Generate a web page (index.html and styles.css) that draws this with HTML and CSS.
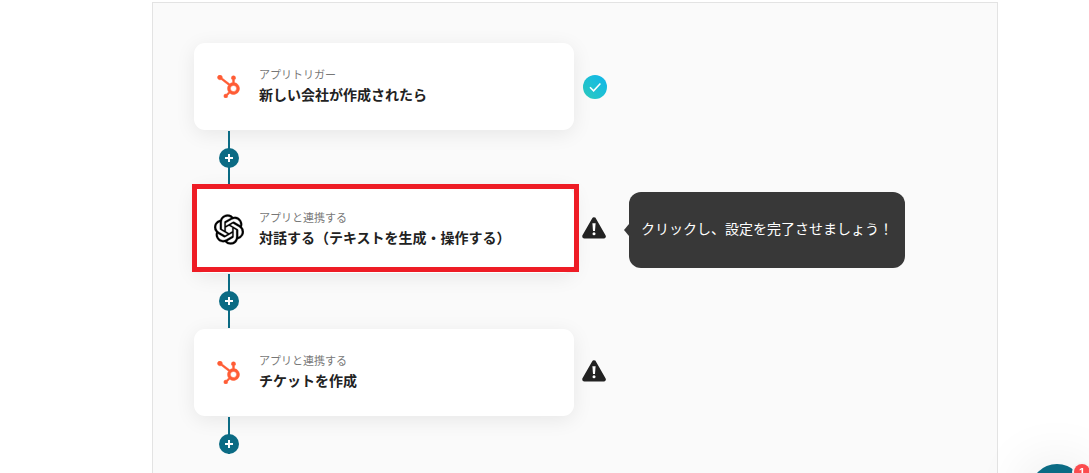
FILE: index.html
```
<!DOCTYPE html>
<html lang="ja">
<head>
<meta charset="utf-8">
<title>フロー</title>
<link rel="stylesheet" href="styles.css">
</head>
<body>
<svg class="defs" aria-hidden="true">
  <symbol id="hubspot" viewBox="0 0 24 24">
    <path fill="#ff5c35" stroke="#ff5c35" stroke-width=".5" d="M18.164 7.93V5.084a2.198 2.198 0 001.267-1.978v-.067A2.2 2.2 0 0017.238.845h-.067a2.2 2.2 0 00-2.193 2.193v.067a2.196 2.196 0 001.252 1.973l.013.006v2.852a6.22 6.22 0 00-2.969 1.31l.012-.01-7.828-6.095A2.497 2.497 0 104.3 4.656l-.012.006 7.697 5.991a6.176 6.176 0 00-1.038 3.446c0 1.343.425 2.588 1.147 3.607l-.013-.02-2.342 2.343a1.968 1.968 0 00-.58-.095h-.002a2.033 2.033 0 102.033 2.033 1.978 1.978 0 00-.1-.595l.005.014 2.317-2.317a6.247 6.247 0 104.782-11.134l-.036-.005zm-.964 9.378a3.206 3.206 0 113.215-3.207v.002a3.206 3.206 0 01-3.207 3.207z"/>
  </symbol>
  <symbol id="openai" viewBox="0 0 24 24">
    <path d="M22.2819 9.8211a5.9847 5.9847 0 0 0-.5157-4.9108 6.0462 6.0462 0 0 0-6.5098-2.9A6.0651 6.0651 0 0 0 4.9807 4.1818a5.9847 5.9847 0 0 0-3.9977 2.9 6.0462 6.0462 0 0 0 .7427 7.0966 5.98 5.98 0 0 0 .511 4.9107 6.051 6.051 0 0 0 6.5146 2.9001A5.9847 5.9847 0 0 0 13.2599 24a6.0557 6.0557 0 0 0 5.7718-4.2058 5.9894 5.9894 0 0 0 3.9977-2.9001 6.0557 6.0557 0 0 0-.7475-7.0729zm-9.022 12.6081a4.4755 4.4755 0 0 1-2.8764-1.0408l.1419-.0804 4.7783-2.7582a.7948.7948 0 0 0 .3927-.6813v-6.7369l2.02 1.1686a.071.071 0 0 1 .038.052v5.5826a4.504 4.504 0 0 1-4.4945 4.4944zm-9.6607-4.1254a4.4708 4.4708 0 0 1-.5346-3.0137l.142.0852 4.783 2.7582a.7712.7712 0 0 0 .7806 0l5.8428-3.3685v2.3324a.0804.0804 0 0 1-.0332.0615L9.74 19.9502a4.4992 4.4992 0 0 1-6.1408-1.6464zM2.3408 7.8956a4.485 4.485 0 0 1 2.3655-1.9728V11.6a.7664.7664 0 0 0 .3879.6765l5.8144 3.3543-2.0201 1.1685a.0757.0757 0 0 1-.071 0l-4.8303-2.7865A4.504 4.504 0 0 1 2.3408 7.872zm16.5963 3.8558L13.1038 8.364 15.1192 7.2a.0757.0757 0 0 1 .071 0l4.8303 2.7913a4.4944 4.4944 0 0 1-.6765 8.1042v-5.6772a.79.79 0 0 0-.407-.667zm2.0107-3.0231l-.142-.0852-4.7735-2.7818a.7759.7759 0 0 0-.7854 0L9.409 9.2297V6.8974a.0662.0662 0 0 1 .0284-.0615l4.8303-2.7866a4.4992 4.4992 0 0 1 6.6802 4.66zM8.3065 12.863l-2.02-1.1638a.0804.0804 0 0 1-.038-.0567V6.0742a4.4992 4.4992 0 0 1 7.3757-3.4537l-.142.0805L8.704 5.459a.7948.7948 0 0 0-.3927.6813zm1.0976-2.3654l2.602-1.4998 2.6069 1.4998v2.9994l-2.5974 1.4997-2.6067-1.4997Z" stroke="#000" stroke-width=".2"/>
  </symbol>
  <symbol id="warning" viewBox="0 0 24 22">
    <path fill="#222" stroke="#222" stroke-width="4.4" stroke-linejoin="round" d="M12 2.5 21.6 19.3H2.4Z"/>
    <path fill="#fff" d="M10.4 6.2h3.2l-.6 7.8h-2z"/>
    <circle cx="12" cy="16.8" r="1.5" fill="#fff"/>
  </symbol>
  <symbol id="plus" viewBox="0 0 20 20">
    <path stroke="#fff" stroke-width="2" d="M10 6v8M6 10h8"/>
  </symbol>
</svg>

<main class="canvas">
  <section class="step">
    <div class="card">
      <svg class="app hubspot"><use href="#hubspot"/></svg>
      <div class="label"><p class="kind">アプリトリガー</p><h2 class="title">新しい会社が作成されたら</h2></div>
    </div>
    <svg class="done" viewBox="0 0 24 24">
      <defs><linearGradient id="tone" x1="0" y1="1" x2="1" y2="0"><stop offset="0" stop-color="#2dcbbd"/><stop offset="1" stop-color="#0eb5ec"/></linearGradient></defs>
      <circle cx="12" cy="12" r="12" fill="url(#tone)"/>
      <path d="m7 12.2 3.6 3.6L17.4 8.4" fill="none" stroke="#fff" stroke-width="1.5"/>
    </svg>
  </section>
  <div class="link"><button class="add" aria-label="追加"><svg><use href="#plus"/></svg></button></div>
  <section class="step">
    <div class="card selected">
      <svg class="app openai"><use href="#openai"/></svg>
      <div class="label"><p class="kind">アプリと連携する</p><h2 class="title">対話する（テキストを生成・操作する）</h2></div>
    </div>
    <svg class="warn"><use href="#warning"/></svg>
    <div class="tip">クリックし、設定を完了させましょう！</div>
  </section>
  <div class="link"><button class="add" aria-label="追加"><svg><use href="#plus"/></svg></button></div>
  <section class="step">
    <div class="card">
      <svg class="app hubspot"><use href="#hubspot"/></svg>
      <div class="label"><p class="kind">アプリと連携する</p><h2 class="title">チケットを作成</h2></div>
    </div>
    <svg class="warn"><use href="#warning"/></svg>
  </section>
  <div class="link last"><button class="add" aria-label="追加"><svg><use href="#plus"/></svg></button></div>
</main>
<div class="launcher"><span class="count">1</span></div>
</body>
</html>
```
FILE: styles.css
```
* { box-sizing: border-box; }
body {
  margin: 0;
  height: 473px;
  overflow: hidden;
  background: #fff;
  color: #222;
  font-family: "Noto Sans CJK JP", "Liberation Sans", sans-serif;
}
.defs { position: absolute; width: 0; height: 0; }
.canvas {
  width: 846px;
  height: 480px;
  margin: 2px 0 0 152px;
  padding: 40px 0 0 41px;
  border: 1px solid #e3e3e3;
  background: #fafafa;
}
.step { display: flex; align-items: center; height: 87px; }
.card {
  position: relative;
  display: flex;
  align-items: center;
  width: 380px;
  height: 87px;
  padding-left: 20px;
  border-radius: 11px;
  background: #fff;
  box-shadow: 0 4px 20px rgba(0, 0, 0, .08);
}
.selected::after {
  content: "";
  position: absolute;
  inset: -2px -5px 1px -2px;
  border: 5px solid #ee1c25;
}
.app { flex: none; width: 30px; margin-right: 15px; overflow: visible; }
.hubspot { height: 23px; padding: 0 4px 0 3px; }
.openai { height: 31px; }
.label { padding-bottom: 2px; }
.kind { margin: 0; font-size: 11px; line-height: 17px; color: #777; font-weight: 400; }
.title { margin: 0; font-size: 14px; line-height: 22px; font-weight: 700; white-space: nowrap; }
.done { flex: none; width: 24px; height: 24px; margin-left: 9px; }
.warn { flex: none; width: 24px; height: 22px; margin: -4px 0 0 8px; }
.link {
  position: relative;
  display: flex;
  align-items: center;
  justify-content: center;
  width: 20px;
  height: 54px;
  margin: 1px 0 1px 25px;
  background: linear-gradient(#0b6b84, #0b6b84) center / 2px 100% no-repeat;
}
.last { height: 37px; align-items: flex-end; }
.add { width: 20px; height: 20px; padding: 0; border: 0; border-radius: 50%; background: #0b6b84; }
.add svg { display: block; width: 20px; height: 20px; }
.tip {
  position: relative;
  display: flex;
  align-items: center;
  width: 276px;
  height: 76px;
  margin-left: 23px;
  padding: 0 0 4px 12px;
  border-radius: 12px;
  background: #383838;
  color: #fff;
  font-size: 14px;
  white-space: nowrap;
}
.tip::before {
  content: "";
  position: absolute;
  left: -5px;
  top: 32px;
  border: 6px solid transparent;
  border-left: 0;
  border-right: 5px solid #383838;
}
.launcher {
  position: fixed;
  left: 1030px;
  top: 464px;
  width: 54px;
  height: 54px;
  border-radius: 50%;
  background: #0b6b84;
  box-shadow: 0 4px 60px rgba(0, 0, 0, .14);
}
.count {
  position: absolute;
  left: 44px;
  top: 0;
  width: 16px;
  height: 16px;
  border-radius: 50%;
  background: #fb4b4e;
  box-shadow: 0 0 0 2px #f4f4f4;
  color: #fff;
  font: 700 11px/16px "Liberation Sans", sans-serif;
  text-align: center;
}
```
